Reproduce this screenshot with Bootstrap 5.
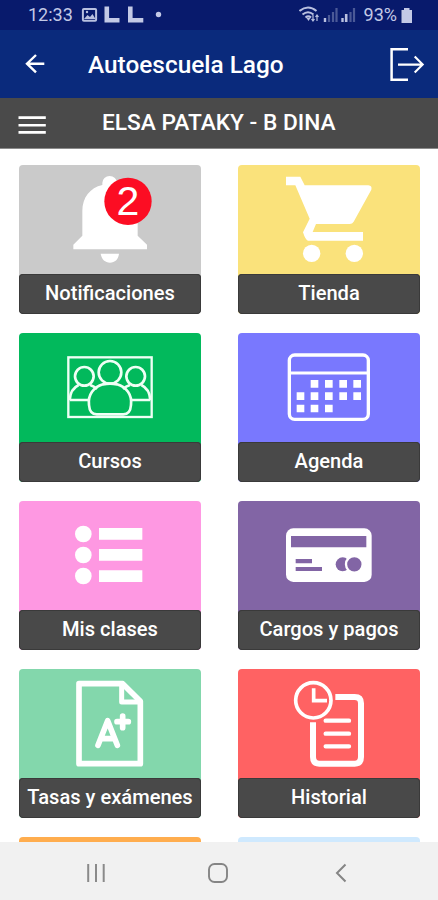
<!DOCTYPE html>
<html lang="es">
<head>
<meta charset="utf-8">
<meta name="viewport" content="width=device-width, initial-scale=1">
<title>Autoescuela Lago</title>
<link href="https://cdn.jsdelivr.net/npm/bootstrap@5.3.0/dist/css/bootstrap.min.css" rel="stylesheet">
<style>
  body { font-family: Roboto, "Liberation Sans", sans-serif; background: #fff; }
  svg { display: block; flex: none; }
  .screen { height: 900px; width: 438px; }
  .status-bar { height: 30px; background: #081a6c; color: #c3c9e6; font-size: 18px; line-height: 30px; padding: 0 25px 0 28px; }
  .signal-icons { margin-right: 3px; }
  .app-bar { height: 68px; background: #0a2a7c; padding: 0 13px 0 24px; }
  .app-title { font-size: 24.4px; font-weight: 500; line-height: 66px; margin-left: 42px; padding-top: 2px; }
  .user-bar { height: 51px; background: #4a4a4a; border-bottom: 1px solid #8b8b8b; padding-left: 18px; }
  .user-name { font-size: 22.7px; font-weight: 500; line-height: 50px; margin-left: 55px; }
  .tiles { padding: 16px 18px 0 19px; height: 693px; }
  .tiles-grid { display: grid; grid-template-columns: 182px 182px; column-gap: 37px; row-gap: 19px; }
  .tile { height: 149px; border-radius: 4px; overflow: hidden; color: #fff; text-decoration: none; }
  .tile-label { height: 40px; margin-top: -1px; position: relative; background: #494949; border-radius: 4px; font-size: 20.1px; font-weight: 500; line-height: 38px; box-shadow: inset 0 0 0 1px #3a3a3a; white-space: nowrap; }
  .bg-bell { background: #cacaca; } .bg-shop { background: #fae27b; }
  .bg-course { background: #02b95c; } .bg-agenda { background: #7978fe; }
  .bg-class { background: #fe98e2; } .bg-pay { background: #8265a5; }
  .bg-exam { background: #83d7ac; } .bg-history { background: #ff6263; }
  .bg-amber { background: #ffad4e; } .bg-sky { background: #cfe9fe; }
  .nav-keys { height: 58px; background: #f1f1f1; padding: 3px 91px 0 86px; }
  .home-key { margin-right: 6px; }
</style>
</head>
<body>
<div class="screen d-flex flex-column overflow-hidden">
  <div class="status-bar d-flex align-items-center justify-content-between flex-shrink-0">
    <div class="d-flex align-items-center">
      <span id="clock">12:33</span>
      <svg class="ms-2" width="84" height="22" viewBox="0 0 84 22">
        <rect x="1.900" y="5" width="13.200" height="11.800" rx="1" fill="none" stroke="#b9c0e0" stroke-width="2"/>
        <path d="M3 15l3.500-4 2.500 2 2.500-3 3 5z" fill="#b9c0e0"/><circle cx="6" cy="8" r="1.200" fill="#b9c0e0"/>
        <path d="M25.800 2.500v13.700h12.700M49.300 2.500v13.700h13" fill="none" stroke="#c3c9e6" stroke-width="4.600"/>
        <circle cx="77.500" cy="10.500" r="2.700" fill="#c3c9e6"/>
      </svg>
    </div>
    <div class="d-flex align-items-center">
      <svg class="signal-icons" width="62" height="22" viewBox="0 0 62 22" fill="none" stroke="#b9c0e0">
        <path d="M.5 7q8.500-7 17 0M3.500 10.500q5.500-4.500 11 0M6.500 13.500q2.800-2.300 5.600 0" stroke-width="2"/>
        <path d="M7.500 14l2 3 2-3z" fill="#b9c0e0" stroke="none"/>
        <path d="M14 11v6M12.500 15l1.500 2 1.500-2M18 17v-6M16.500 13l1.500-2 1.500 2" stroke-width="1.200"/>
        <path d="M26 18v-4M43.500 18v-4" stroke-width="2.400"/>
        <path d="M30 18v-7M34 18v-10M37.500 18v-14M51.500 18v-10M55 18v-14" stroke="#4b5997" stroke-width="2.200"/>
        <path d="M47.200 18v-8" stroke-width="2.600"/>
      </svg>
      <span id="battery">93%</span>
      <svg class="ms-1" width="12" height="18" viewBox="0 0 12 18"><path d="M3 2h5.500v2h2.500v13h-10.500v-13h2.500z" fill="#c3c9e6"/></svg>
    </div>
  </div>
  <header class="app-bar d-flex align-items-center text-white flex-shrink-0">
    <svg width="22" height="22" viewBox="0 0 22 22" fill="none" stroke="#fff" stroke-width="2.400"><path d="M20.300 10.700h-17M12 2L3 10.700l9 8.700"/></svg>
    <h1 class="app-title mb-0">Autoescuela Lago</h1>
    <svg class="ms-auto" width="36" height="36" viewBox="0 0 36 36" fill="none" stroke="#fff" stroke-width="2.500"><path d="M19 3.200H2.600v30.600H19"/><path d="M9 18.600h24M25.700 10.600l8 8-8 8" stroke-width="2.100"/></svg>
  </header>
  <div class="user-bar d-flex align-items-center text-white flex-shrink-0">
    <svg width="29" height="22" viewBox="0 0 29 22" fill="none" stroke="#fff" stroke-width="2.600"><path d="M.5 5.600h27.300M.5 13.200h27.300M.5 20.400h27.300"/></svg>
    <div class="user-name">ELSA PATAKY - B DINA</div>
  </div>
  <main class="tiles flex-shrink-0 overflow-hidden">
    <div class="tiles-grid">
      <a class="tile bg-bell">
        <svg width="182" height="110" viewBox="27 30 546 330">
          <path fill="#fff" d="M277 90V84a22 21 0 0 1 44 0V90C360 98 383 128 383 168V242L411 269V283H190V269L217 242V168C217 128 240 98 277 90ZM272 296H327C325 313 315 323 300 323S275 313 272 296Z"/>
          <circle cx="354" cy="139" r="71" fill="#fc0d23"/>
          <text x="354" y="181" text-anchor="middle" font-family="Liberation Sans, Arial, sans-serif" font-size="123" fill="#fff">2</text>
        </svg>
        <div class="tile-label text-center">Notificaciones</div>
      </a>
      <a class="tile bg-shop">
        <svg width="182" height="110" viewBox="30 30 546 330" fill="#fff">
          <path d="M174 65H217L230 91H421Q433 92 430 104L377 200Q373 207 365 207H264L254 231H405V257H240Q233 257 225 232L245 191L202 91H174Z"/>
          <circle cx="251" cy="295" r="26"/><circle cx="379" cy="295" r="26"/>
        </svg>
        <div class="tile-label text-center">Tienda</div>
      </a>
      <a class="tile bg-course">
        <svg width="182" height="110" viewBox="27 24 546 330" fill="none" stroke="#effff5" stroke-width="7">
          <rect x="175" y="97" width="250" height="179"/>
          <g stroke-width="8"><circle cx="223" cy="154" r="28"/><circle cx="377" cy="154" r="28"/>
          <path d="M179 225Q181 192 206 180M240 180Q252 184 261 192M179 225H238M421 225Q419 192 394 180M360 180Q348 184 339 192M421 225H362"/>
          <circle cx="300" cy="142" r="34"/>
          <path d="M279 178C251 186 233 209 237 240Q239 268 260 268H340Q361 268 363 240C367 209 349 186 321 178Q300 174 279 178Z"/></g>
        </svg>
        <div class="tile-label text-center">Cursos</div>
      </a>
      <a class="tile bg-agenda">
        <svg width="182" height="110" viewBox="30 24 546 330">
          <rect x="184" y="90" width="237" height="193" rx="16" fill="none" stroke="#fff" stroke-width="10"/>
          <path d="M184 144H421" stroke="#fff" stroke-width="9"/>
          <path d="M248 176.500h23m20 0h23m20 0h23m19 0h23M206 213.500h23m19 0h23m20 0h23m20 0h23m19 0h23M206 250.500h23m19 0h23m20 0h23" stroke="#fff" stroke-width="23"/>
        </svg>
        <div class="tile-label text-center">Agenda</div>
      </a>
      <a class="tile bg-class">
        <svg width="182" height="110" viewBox="27 27 546 330" fill="#fff">
          <circle cx="220" cy="126" r="25"/><circle cx="220" cy="189" r="25"/><circle cx="220" cy="252" r="25"/>
          <path d="M267 108h130v35h-130zM267 171h130v35h-130zM267 235h130v35h-130z"/>
        </svg>
        <div class="tile-label text-center">Mis clases</div>
      </a>
      <a class="tile bg-pay">
        <svg width="182" height="110" viewBox="30 27 546 330">
          <rect x="174" y="109" width="257" height="161" rx="22" fill="#fff"/>
          <g fill="#8265a5"><path d="M189 132h226v34H189zM203 201h49v13h-49zM203 225h79v12h-79z"/>
          <circle cx="344" cy="217" r="21"/></g>
          <circle cx="379" cy="217" r="25" fill="#8265a5" stroke="#fff" stroke-width="7"/>
        </svg>
        <div class="tile-label text-center">Cargos y pagos</div>
      </a>
      <a class="tile bg-exam">
        <svg width="182" height="110" viewBox="27 27 546 330" fill="none" stroke="#fff" stroke-linejoin="round" stroke-linecap="round" stroke-width="17">
          <path d="M207 71H338L391 124V311H207Z"/><path d="M335 72V126H390" stroke-width="15"/>
          <path d="M264 256L293 182L322 256M275 236H311M338 168V203M321 185H355"/>
        </svg>
        <div class="tile-label text-center">Tasas y exámenes</div>
      </a>
      <a class="tile bg-history">
        <svg width="182" height="110" viewBox="30 27 546 330" fill="none" stroke="#fff">
          <circle cx="256" cy="121" r="53" stroke-width="11"/>
          <path d="M257 85V122H297" stroke-width="11"/>
          <path d="M322 111H380Q399 111 399 130V291Q399 311 380 311H274Q255 311 255 291V187" stroke-width="18"/>
          <path d="M293 182H363M293 221H363M293 259H363" stroke-width="13" stroke-linecap="round"/>
        </svg>
        <div class="tile-label text-center">Historial</div>
      </a>
      <a class="tile bg-amber"></a>
      <a class="tile bg-sky"></a>
    </div>
  </main>
  <nav class="nav-keys d-flex align-items-center justify-content-between flex-shrink-0">
    <svg width="20" height="20" viewBox="0 0 20 20" stroke="#8a8a8a" stroke-width="2"><path d="M2.200 1v18M10 1v18M17.700 1v18"/></svg>
    <svg class="home-key" width="20" height="20" viewBox="0 0 20 20" fill="none" stroke="#858585" stroke-width="1.900"><rect x="1" y="1" width="18" height="18" rx="5.500"/></svg>
    <svg width="12" height="20" viewBox="0 0 12 20" fill="none" stroke="#858585" stroke-width="2"><path d="M10.500 1.500L2 10l8.500 8.500"/></svg>
  </nav>
</div>
<script src="https://cdn.jsdelivr.net/npm/bootstrap@5.3.0/dist/js/bootstrap.bundle.min.js"></script>
</body>
</html>
